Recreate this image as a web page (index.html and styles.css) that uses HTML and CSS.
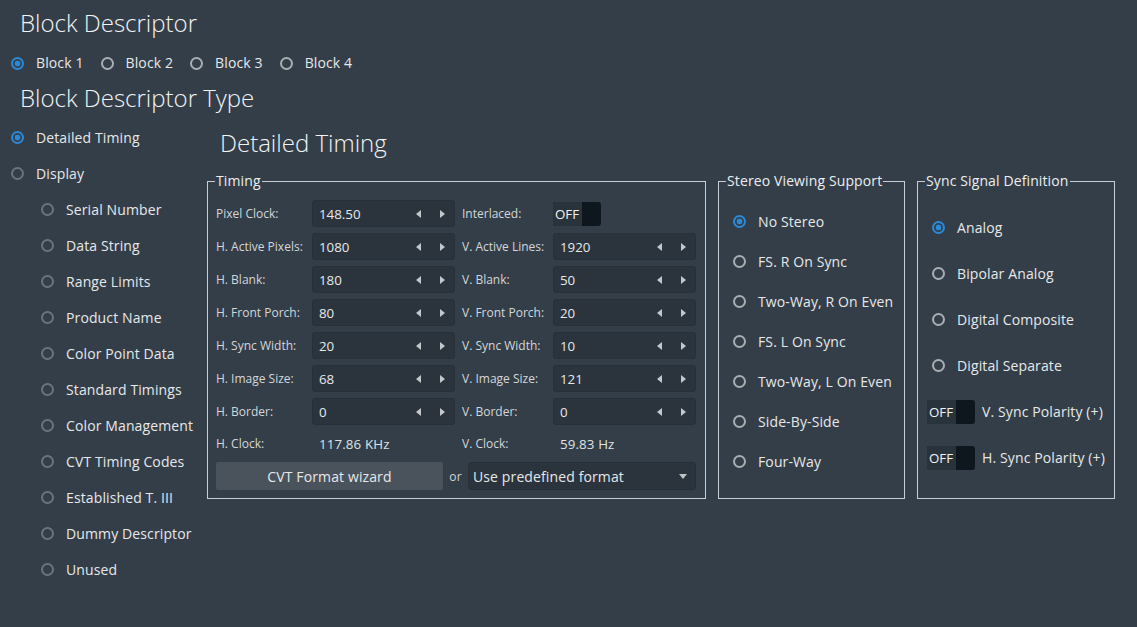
FILE: index.html
```html
<!DOCTYPE html>
<html lang="en">
<head>
  <meta charset="UTF-8" />
  <meta name="viewport" content="width=device-width, initial-scale=1.0"/>
  <title>Block Descriptor</title>
  <link rel="stylesheet" href="styles.css">
</head>
<body>

  <!-- Choix du bloc -->
  <h1 class="title">Block Descriptor</h1>
  <div class="block-row">
    <label class="opt"><span class="radio on"></span>Block 1</label>
    <label class="opt"><span class="radio"></span>Block 2</label>
    <label class="opt"><span class="radio"></span>Block 3</label>
    <label class="opt"><span class="radio"></span>Block 4</label>
  </div>

  <h1 class="title title-type">Block Descriptor Type</h1>

  <div class="main">
    <!-- Types de descripteur -->
    <ul class="types">
      <li><span class="radio on"></span>Detailed Timing</li>
      <li><span class="radio dim"></span>Display</li>
      <li class="sub"><span class="radio dim"></span>Serial Number</li>
      <li class="sub"><span class="radio dim"></span>Data String</li>
      <li class="sub"><span class="radio dim"></span>Range Limits</li>
      <li class="sub"><span class="radio dim"></span>Product Name</li>
      <li class="sub"><span class="radio dim"></span>Color Point Data</li>
      <li class="sub"><span class="radio dim"></span>Standard Timings</li>
      <li class="sub"><span class="radio dim"></span>Color Management</li>
      <li class="sub"><span class="radio dim"></span>CVT Timing Codes</li>
      <li class="sub"><span class="radio dim"></span>Established T. III</li>
      <li class="sub"><span class="radio dim"></span>Dummy Descriptor</li>
      <li class="sub"><span class="radio dim"></span>Unused</li>
    </ul>

    <section class="detail">
      <h2 class="title">Detailed Timing</h2>

      <div class="groups">
        <!-- Timing -->
        <fieldset class="group timing">
          <legend>Timing</legend>
          <div class="grid">
            <span class="lbl">Pixel Clock:</span>
            <div class="spin"><span class="val">148.50</span><span class="arr left"></span><span class="arr right"></span></div>
            <span class="lbl lbl2">Interlaced:</span>
            <div class="cell"><span class="toggle"><span class="knob">OFF</span></span></div>

            <span class="lbl">H. Active Pixels:</span>
            <div class="spin"><span class="val">1080</span><span class="arr left"></span><span class="arr right"></span></div>
            <span class="lbl lbl2">V. Active Lines:</span>
            <div class="spin"><span class="val">1920</span><span class="arr left"></span><span class="arr right"></span></div>

            <span class="lbl">H. Blank:</span>
            <div class="spin"><span class="val">180</span><span class="arr left"></span><span class="arr right"></span></div>
            <span class="lbl lbl2">V. Blank:</span>
            <div class="spin"><span class="val">50</span><span class="arr left"></span><span class="arr right"></span></div>

            <span class="lbl">H. Front Porch:</span>
            <div class="spin"><span class="val">80</span><span class="arr left"></span><span class="arr right"></span></div>
            <span class="lbl lbl2">V. Front Porch:</span>
            <div class="spin"><span class="val">20</span><span class="arr left"></span><span class="arr right"></span></div>

            <span class="lbl">H. Sync Width:</span>
            <div class="spin"><span class="val">20</span><span class="arr left"></span><span class="arr right"></span></div>
            <span class="lbl lbl2">V. Sync Width:</span>
            <div class="spin"><span class="val">10</span><span class="arr left"></span><span class="arr right"></span></div>

            <span class="lbl">H. Image Size:</span>
            <div class="spin"><span class="val">68</span><span class="arr left"></span><span class="arr right"></span></div>
            <span class="lbl lbl2">V. Image Size:</span>
            <div class="spin"><span class="val">121</span><span class="arr left"></span><span class="arr right"></span></div>

            <span class="lbl">H. Border:</span>
            <div class="spin"><span class="val">0</span><span class="arr left"></span><span class="arr right"></span></div>
            <span class="lbl lbl2">V. Border:</span>
            <div class="spin"><span class="val">0</span><span class="arr left"></span><span class="arr right"></span></div>

            <span class="lbl">H. Clock:</span>
            <span class="readout">117.86 KHz</span>
            <span class="lbl lbl2">V. Clock:</span>
            <span class="readout">59.83 Hz</span>

            <div class="actions">
              <button class="wizard">CVT Format wizard</button>
              <span class="or">or</span>
              <div class="combo"><span class="val">Use predefined format</span><span class="drop"></span></div>
            </div>
          </div>
        </fieldset>

        <!-- Stéréo -->
        <fieldset class="group stereo">
          <legend>Stereo Viewing Support</legend>
          <ul class="options">
            <li><span class="radio on"></span>No Stereo</li>
            <li><span class="radio"></span>FS. R On Sync</li>
            <li><span class="radio"></span>Two-Way, R On Even</li>
            <li><span class="radio"></span>FS. L On Sync</li>
            <li><span class="radio"></span>Two-Way, L On Even</li>
            <li><span class="radio"></span>Side-By-Side</li>
            <li><span class="radio"></span>Four-Way</li>
          </ul>
        </fieldset>

        <!-- Signal de synchro -->
        <fieldset class="group sync">
          <legend>Sync Signal Definition</legend>
          <ul class="options">
            <li><span class="radio on"></span>Analog</li>
            <li><span class="radio"></span>Bipolar Analog</li>
            <li><span class="radio"></span>Digital Composite</li>
            <li><span class="radio"></span>Digital Separate</li>
            <li class="switch"><span class="toggle"><span class="knob">OFF</span></span>V. Sync Polarity (+)</li>
            <li class="switch"><span class="toggle"><span class="knob">OFF</span></span>H. Sync Polarity (+)</li>
          </ul>
        </fieldset>
      </div>
    </section>
  </div>

</body>
</html>
```

FILE: styles.css
```css
body {
  margin: 0;
  background: #343e48;
  color: #e6e8ea;
  font-family: "Open Sans", "Noto Sans", sans-serif;
  font-size: 14px;
  letter-spacing: 0.12px;
  white-space: nowrap;
  width: 1137px;
  height: 627px;
  overflow: hidden;
}
.title {
  font-size: 24px;
  font-weight: 300;
  line-height: 32px;
  letter-spacing: 0;
  margin: 7px 0 0 20px;
  color: #f2f4f5;
}
.title-type {
  margin-top: 9px;
}
.block-row {
  display: flex;
  align-items: center;
  gap: 17px;
  height: 20px;
  line-height: 20px;
  margin-top: 14px;
  padding-left: 11px;
}
.opt {
  display: flex;
  align-items: center;
}

/* boutons radio */
.radio {
  width: 13px;
  height: 13px;
  box-sizing: border-box;
  border: 2px solid #a9aeb2;
  border-radius: 50%;
  margin-right: 12px;
  flex: none;
}
.radio.dim {
  border-color: #6b747b;
}
.radio.on {
  border-color: #2a8ad9;
  background: radial-gradient(circle, #2a8ad9 0 2.6px, transparent 3.2px);
}

.main {
  display: flex;
  margin-top: 6px;
}
.types {
  width: 207px;
  list-style: none;
  margin: 0;
  padding: 0;
  flex: none;
}
.types li {
  display: flex;
  align-items: center;
  height: 36px;
  padding-left: 11px;
  padding-bottom: 1px;
  box-sizing: border-box;
}
.types li.sub {
  padding-left: 41px;
}
.detail {
  flex: 1;
  padding-top: 7px;
}
.detail .title {
  margin: 0 0 0 13px;
}
.groups {
  display: flex;
  gap: 12px;
  margin-top: 12px;
}

/* group boxes */
.group {
  margin: 0;
  border: 1px solid #c9cdd1;
  padding: 0 8px 8px 8px;
  min-width: 0;
  box-sizing: border-box;
}
.group legend {
  padding: 0 1px;
  margin-left: -1px;
  line-height: 20px;
  color: #eceef0;
}
.timing {
  width: 499px;
  padding-top: 9px;
  padding-right: 9px;
}
.stereo {
  width: 187px;
}
.sync {
  width: 198px;
}

.grid {
  display: grid;
  grid-template-columns: 96px 143px 98px 143px;
  grid-template-rows: repeat(7, 27px) 25px 28px;
  row-gap: 6px;
  align-items: center;
}
.lbl {
  font-size: 12px;
  letter-spacing: 0;
  color: #d3d7da;
}
.lbl2 {
  padding-left: 7px;
}
.cell {
  display: flex;
  align-items: center;
}
.readout {
  padding-left: 7px;
  font-size: 13.33px;
  color: #dfe2e4;
}

/* spin boxes */
.spin, .combo {
  display: flex;
  align-items: center;
  height: 27px;
  box-sizing: border-box;
  background: #2b343d;
  border: 1px solid #273038;
  border-radius: 3px;
}
.spin .val {
  flex: 1;
  padding-left: 6px;
  font-size: 13.33px;
  letter-spacing: 0;
}
.arr {
  width: 24px;
  height: 100%;
  display: flex;
  align-items: center;
  justify-content: center;
}
.arr::before {
  content: "";
  border-top: 4px solid transparent;
  border-bottom: 4px solid transparent;
}
.arr.left::before {
  border-right: 5px solid #c4c8cb;
}
.arr.right::before {
  border-left: 5px solid #c4c8cb;
}

/* interrupteur OFF */
.toggle {
  display: inline-flex;
  width: 48px;
  height: 24px;
  background: #0e171e;
  border-radius: 3px;
  flex: none;
}
.knob {
  width: 29px;
  height: 24px;
  box-sizing: border-box;
  padding-left: 2px;
  line-height: 24px;
  font-size: 13.33px;
  letter-spacing: 0;
  background: #29333c;
  border-radius: 3px 0 0 3px;
  color: #f2f2f2;
}

.actions {
  grid-column: 1 / 5;
  display: flex;
  align-items: center;
  height: 28px;
}
.wizard {
  width: 227px;
  height: 28px;
  background: #4a535c;
  border: none;
  border-radius: 2px;
  color: #e6e8ea;
  font: inherit;
  letter-spacing: inherit;
  padding: 0;
}
.or {
  width: 25px;
  text-align: center;
  color: #d3d7da;
  font-size: 12px;
}
.combo {
  flex: 1;
  height: 28px;
  padding-left: 4px;
}
.combo .val {
  flex: 1;
}
.drop {
  margin-right: 8px;
  border-left: 4px solid transparent;
  border-right: 4px solid transparent;
  border-top: 5px solid #bfc3c6;
}

/* listes d'options */
.options {
  list-style: none;
  margin: 0;
  padding: 0;
}
.options li {
  display: flex;
  align-items: center;
  padding-left: 6px;
  padding-bottom: 1px;
  box-sizing: border-box;
}
.stereo .options {
  padding-top: 11px;
}
.stereo .options li {
  height: 40px;
}
.sync .options {
  padding-top: 14px;
}
.sync .options li {
  height: 46px;
}
.sync .options li.switch {
  padding-left: 1px;
}
.switch .toggle {
  margin-right: 7px;
}
```
